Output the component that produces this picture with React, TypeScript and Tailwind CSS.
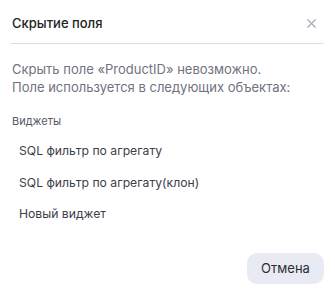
import { X } from 'lucide-react';

const widgets = ['SQL фильтр по агрегату', 'SQL фильтр по агрегату(клон)', 'Новый виджет'];

export default function App() {
  return (
    <div className="h-[301px] w-[335px] bg-white font-['Inter','Liberation_Sans',sans-serif]">
      <div className="flex h-full flex-col px-[11px]">
        <div className="flex h-[44px] items-center justify-between border-b border-[#d9dee7] pl-px pt-[4px]">
          <span className="text-[13px] font-medium text-[#222]">Скрытие поля</span>
          <X size={15} strokeWidth={1.8} className="mr-[5px] text-[#a3a7b8]" />
        </div>
        <p className="mt-[16px] pl-px text-[13px] leading-[18px] text-[#6f7280]">
          Скрыть поле «ProductID» невозможно.
          <br />
          Поле используется в следующих объектах:
        </p>
        <div className="mt-[18px] pl-px text-[11px] leading-[14px] text-[#555a66]">Виджеты</div>
        <ul className="mt-[14px] flex flex-col gap-[13.5px] pl-[8px] text-[12.2px] leading-[18px] text-[#3d404a]">
          {widgets.map((w) => (
            <li key={w}>{w}</li>
          ))}
        </ul>
        <div className="mt-auto mb-[17px] flex justify-end">
          <button className="h-[31px] w-[77px] rounded-[10px] bg-[#e8ebf3] text-[13px] text-[#2b2e36]">Отмена</button>
        </div>
      </div>
    </div>
  );
}
